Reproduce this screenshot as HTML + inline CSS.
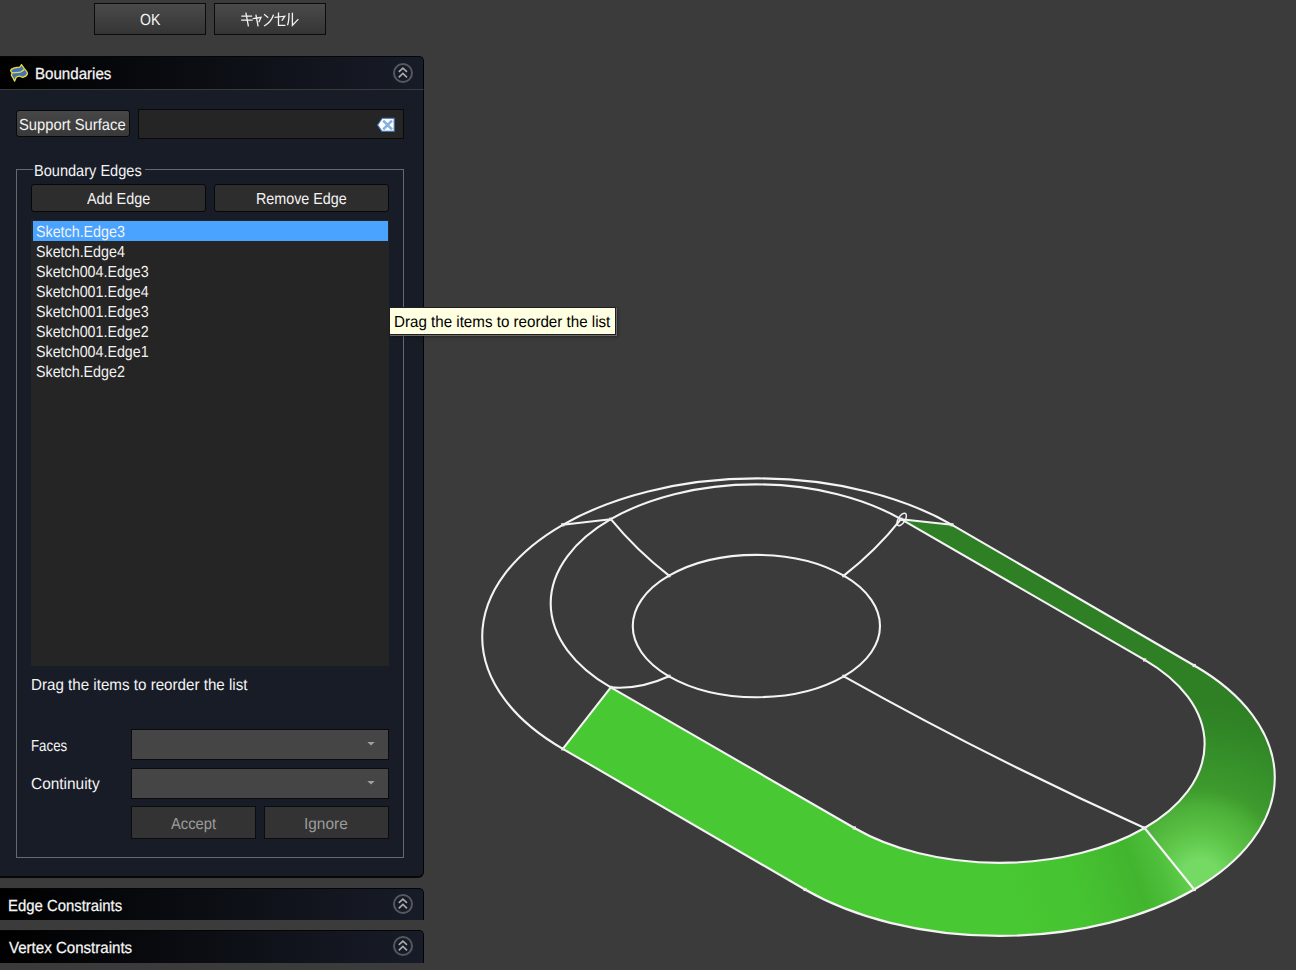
<!DOCTYPE html>
<html><head><meta charset="utf-8">
<style>
*{box-sizing:border-box;margin:0;padding:0}
html,body{width:1296px;height:970px;overflow:hidden;background:#3b3b3b;font-family:"Liberation Sans",sans-serif;color:#f4f4f4}
.a{position:absolute}
.t{position:absolute;white-space:nowrap;line-height:1}
.btn{position:absolute;border:1px solid #0b0b0b;background:linear-gradient(#4a4a4a,#353535)}
.hdr{position:absolute;left:0;width:424px;height:33px;border-top:1px solid #050505;border-right:1px solid #050505;border-top-right-radius:5px;background:linear-gradient(90deg,#000 0%,#181c28 100%)}
.pbtn{position:absolute;border:1px solid #080808;border-radius:3px;background:#2d2d2d}
.combo{position:absolute;border:1px solid #0c0c0c;background:#454545}
.gbtn{position:absolute;border:1px solid #0c0c0c;background:#333}
.circ{position:absolute;width:20px;height:20px;border:2px solid #55585f;border-radius:50%}
.b{font-weight:normal;-webkit-text-stroke:0.45px #f4f4f4}
.li{position:absolute;left:36px;font-size:14.2px;line-height:1;white-space:nowrap;color:#f2f2f2}
</style></head>
<body>
<!-- top buttons -->
<div class="btn" style="left:94px;top:3px;width:112px;height:32px"></div>
<div class="btn" style="left:214px;top:3px;width:112px;height:32px"></div>
<svg class="a" style="left:0;top:0" width="330" height="40"><g fill="none" stroke="#f2f2f2" stroke-width="1.3" stroke-linecap="square">
<path d="M242 16.2H251.5M241.8 20.2H252M246 13.3L248.3 25.7"/>
<path d="M253.3 18.6L261 17.3L259 21.7M256 15.2L258 25.7"/>
<path d="M264.6 14.7L267.7 17.3M264.6 25.7Q271 22 273.3 15.2"/>
<path d="M275.1 17.3L284.8 16.2L282.2 20.2M278.5 13.1V25.4H284.8"/>
<path d="M289 13.6Q289 21 287.7 24.6M292.4 13.3V25.4L297.9 19.6"/>
</g></svg>

<!-- Boundaries panel -->
<div class="a" style="left:0;top:89px;width:424px;height:789px;background:#181c27;border-right:1px solid #050505;border-bottom:2px solid #070707;border-bottom-right-radius:6px;border-top:1px solid #3a3a3a"></div>
<div class="hdr" style="top:56px"></div>
<svg class="a" style="left:6px;top:60px" width="26" height="26">
<path d="M4.6 10.5 C5.5 8.5 8 7.8 10.7 7.5 C12.5 7.4 13.5 7.5 14 7 L15.5 4.6 L18.5 8.8 C19.5 10 21.5 12 21.4 13.4 C21.3 15 20.5 16 17.4 17.2 C15.5 17.5 14.5 16 13.4 16.1 C12 16.3 11 16.5 10.2 17.2 L8.6 21.2 L6.7 17.2 C6 16.5 5.4 15.8 5.4 15 C5.4 14 6.2 13.5 6.2 12.9 C5.5 12 4.6 11.5 4.6 10.5 Z" fill="#3f72b8" stroke="#e8d83c" stroke-width="1.3" stroke-linejoin="round"/>
<path d="M6.2 12.9 C8 12.5 13 12.8 15 11.8 C16.5 11 17.5 10 18.5 9.1" fill="none" stroke="#e8d83c" stroke-width="1.3"/>
</svg>
<div class="circ" style="left:393px;top:63px"></div>
<svg class="a" style="left:393px;top:63px" width="20" height="20"><path d="M5.8 8.8 L9.9 5.2 L14 8.8 M5.8 14.4 L9.9 10.4 L14 14.4" fill="none" stroke="#a8a9ab" stroke-width="1.7"/></svg>

<div class="pbtn" style="left:16px;top:110px;width:114px;height:27px;background:linear-gradient(#474747,#393939)"></div>
<div class="a" style="left:138px;top:109px;width:266px;height:30px;background:#252525;border:1px solid #0a0a0a"></div>
<svg class="a" style="left:370px;top:110px" width="30" height="30">
<path d="M7.6 15 L12.2 8.2 H24.2 V21.4 H11.9 Z" fill="#fdfdfd" stroke="#3d6fb5" stroke-width="1.1"/>
<path d="M13.2 10.6 L22 19.4 M22 10.6 L13.2 19.4" stroke="#86aede" stroke-width="2.6"/>
</svg>

<!-- group box -->
<div class="a" style="left:16px;top:169px;width:388px;height:689px;border:1px solid #66696f"></div>
<div class="a" style="left:33px;top:160px;width:112px;height:20px;background:#181c27"></div>

<div class="pbtn" style="left:31px;top:184px;width:175px;height:28px"></div>
<div class="pbtn" style="left:214px;top:184px;width:175px;height:28px"></div>

<!-- list -->
<div class="a" style="left:31px;top:220px;width:358px;height:446px;background:#252525"></div>
<div class="a" style="left:33px;top:221px;width:355px;height:20px;background:#4aa3ff"></div>


<div class="combo" style="left:131px;top:729px;width:258px;height:31px"></div>
<svg class="a" style="left:364px;top:740px" width="14" height="8"><path d="M3.3 2 H10.7 L7 5.6 Z" fill="#a0a0a0"/></svg>
<div class="combo" style="left:131px;top:768px;width:258px;height:31px"></div>
<svg class="a" style="left:364px;top:779px" width="14" height="8"><path d="M3.3 2 H10.7 L7 5.6 Z" fill="#a0a0a0"/></svg>

<div class="gbtn" style="left:131px;top:806px;width:125px;height:33px"></div>
<div class="gbtn" style="left:264px;top:806px;width:125px;height:33px"></div>

<!-- collapsed panels -->
<div class="hdr" style="top:888px;height:32px"></div>
<div class="circ" style="left:393px;top:894px"></div>
<svg class="a" style="left:393px;top:894px" width="20" height="20"><path d="M5.8 8.8 L9.9 5.2 L14 8.8 M5.8 14.4 L9.9 10.4 L14 14.4" fill="none" stroke="#a8a9ab" stroke-width="1.7"/></svg>
<div class="hdr" style="top:930px;height:33px"></div>
<div class="circ" style="left:393px;top:936px"></div>
<svg class="a" style="left:393px;top:936px" width="20" height="20"><path d="M5.8 8.8 L9.9 5.2 L14 8.8 M5.8 14.4 L9.9 10.4 L14 14.4" fill="none" stroke="#a8a9ab" stroke-width="1.7"/></svg>

<!-- 3D view -->
<svg class="a" style="left:0;top:0" width="1296" height="970">
<defs>
<linearGradient id="g1" x1="1000" y1="880" x2="1170.3" y2="821.9" gradientUnits="userSpaceOnUse"><stop offset="0" stop-color="#48c832"/><stop offset="0.4" stop-color="#46c331"/><stop offset="0.72" stop-color="#42b52e"/><stop offset="0.86" stop-color="#4dbe3b"/><stop offset="1" stop-color="#62ce4c"/></linearGradient>
<radialGradient id="g2" cx="1200" cy="878" r="180" gradientUnits="userSpaceOnUse"><stop offset="0.1" stop-color="#74da64"/><stop offset="0.25" stop-color="#5cc447"/><stop offset="0.4" stop-color="#4cb038"/><stop offset="0.49" stop-color="#3e9b2d"/><stop offset="0.68" stop-color="#36902a"/><stop offset="0.83" stop-color="#318626"/><stop offset="1" stop-color="#2f7f24"/></radialGradient>
</defs>
<path d="M610.8 687.4 L854.4 828 A205.21 118.92 0 0 0 1144.6 828 L1194.2 889.5 A275.2 158.4 0 0 1 805 889.5 L562.8 748.8 Z" fill="url(#g1)"/>
<path d="M901 519.2 L952 524.8 L1194.2 665.5 A275.2 158.4 0 0 1 1194.2 889.5 L1144.6 828 A205.21 118.92 0 0 0 1144.6 659.9 Z" fill="url(#g2)"/>
<g fill="none" stroke="#f4f4f4" stroke-width="2.1">
<path d="M562.8 748.8 A275.2 158.4 0 0 1 562.8 524.8 A275.2 158.4 0 0 1 952 524.8"/>
<path d="M610.8 687.4 A205.21 118.92 0 0 1 610.8 519.2 A205.21 118.92 0 0 1 901 519.2"/>
<ellipse cx="756.38" cy="626.03" rx="123.62" ry="71.16"/>
<path d="M805 889.5 A275.2 158.4 0 0 0 1194.2 889.5 A275.2 158.4 0 0 0 1194.2 665.5"/>
<path d="M854.4 828 A205.21 118.92 0 0 0 1144.6 828 A205.21 118.92 0 0 0 1144.6 659.9"/>
<path d="M562.8 748.8 L805 889.5 M610.8 687.4 L854.4 828 M952 524.8 L1194.2 665.5 M901 519.2 L1144.6 659.9"/>
<path d="M562.8 524.8 L610.8 519.2 M901 519.2 L952 524.8 M562.8 748.8 L610.8 687.4 M1194.2 889.5 L1144.6 828"/>
<path d="M610.8 519.2 Q636.8 550.7 669 575.7 M901 519.2 Q876 550.7 843.8 575.7 M610.8 687.4 Q639.8 689.8 669 676.3 M843.8 676.3 Q990.2 758.5 1144.6 828"/>
</g>
<g fill="#ececec"><rect x="561.2" y="523.2" width="3.2" height="3.2"/><rect x="609.2" y="517.6" width="3.2" height="3.2"/><rect x="667.4" y="574.1" width="3.2" height="3.2"/><rect x="842.2" y="574.1" width="3.2" height="3.2"/><rect x="899.4" y="517.6" width="3.2" height="3.2"/><rect x="950.4" y="523.2" width="3.2" height="3.2"/><rect x="609.2" y="685.8" width="3.2" height="3.2"/><rect x="561.2" y="747.2" width="3.2" height="3.2"/><rect x="667.4" y="674.7" width="3.2" height="3.2"/><rect x="842.2" y="674.7" width="3.2" height="3.2"/><rect x="852.8" y="826.4" width="3.2" height="3.2"/><rect x="803.4" y="887.9" width="3.2" height="3.2"/><rect x="1143.0" y="658.3" width="3.2" height="3.2"/><rect x="1192.6" y="663.9" width="3.2" height="3.2"/><rect x="1143.0" y="826.4" width="3.2" height="3.2"/><rect x="1192.6" y="887.9" width="3.2" height="3.2"/></g>
<ellipse cx="901.7" cy="519.4" rx="7" ry="3.4" transform="rotate(-58 901.7 519.4)" fill="none" stroke="#f0f0f0" stroke-width="1.5"/>
</svg>

<!-- tooltip -->
<div class="a" style="left:389px;top:307px;width:227px;height:28px;background:#ffffe1;border:1px solid #1e1e1e;box-shadow:1px 1px 0 #6a6a6a,2px 2px 3px rgba(0,0,0,.35)"></div>
<span style="position:absolute;left:139.72px;top:13px;font-family:'Liberation Sans';line-height:1;white-space:nowrap;text-rendering:geometricPrecision;font-size:16.0px;color:#f4f4f4;transform:scaleX(0.8818);transform-origin:0 0;">OK</span>
<span style="position:absolute;left:34.56px;top:67px;font-family:'Liberation Sans';line-height:1;white-space:nowrap;text-rendering:geometricPrecision;font-size:16.0px;color:#f6f6f6;transform:scaleX(0.9437);transform-origin:0 0;-webkit-text-stroke:0.25px currentColor;">Boundaries</span>
<span style="position:absolute;left:19.48px;top:118px;font-family:'Liberation Sans';line-height:1;white-space:nowrap;text-rendering:geometricPrecision;font-size:16.0px;color:#f4f4f4;transform:scaleX(0.9219);transform-origin:0 0;">Support Surface</span>
<span style="position:absolute;left:33.89px;top:164px;font-family:'Liberation Sans';line-height:1;white-space:nowrap;text-rendering:geometricPrecision;font-size:16.0px;color:#f4f4f4;transform:scaleX(0.9103);transform-origin:0 0;">Boundary Edges</span>
<span style="position:absolute;left:87.00px;top:192px;font-family:'Liberation Sans';line-height:1;white-space:nowrap;text-rendering:geometricPrecision;font-size:16.0px;color:#f4f4f4;transform:scaleX(0.9000);transform-origin:0 0;">Add Edge</span>
<span style="position:absolute;left:255.60px;top:192px;font-family:'Liberation Sans';line-height:1;white-space:nowrap;text-rendering:geometricPrecision;font-size:16.0px;color:#f4f4f4;transform:scaleX(0.8950);transform-origin:0 0;">Remove Edge</span>
<span style="position:absolute;left:31.05px;top:678px;font-family:'Liberation Sans';line-height:1;white-space:nowrap;text-rendering:geometricPrecision;font-size:16.0px;color:#f4f4f4;transform:scaleX(0.9474);transform-origin:0 0;">Drag the items to reorder the list</span>
<span style="position:absolute;left:30.67px;top:739px;font-family:'Liberation Sans';line-height:1;white-space:nowrap;text-rendering:geometricPrecision;font-size:16.0px;color:#f4f4f4;transform:scaleX(0.8310);transform-origin:0 0;">Faces</span>
<span style="position:absolute;left:30.64px;top:777px;font-family:'Liberation Sans';line-height:1;white-space:nowrap;text-rendering:geometricPrecision;font-size:16.0px;color:#f4f4f4;transform:scaleX(0.9643);transform-origin:0 0;">Continuity</span>
<span style="position:absolute;left:171.00px;top:817px;font-family:'Liberation Sans';line-height:1;white-space:nowrap;text-rendering:geometricPrecision;font-size:16.0px;color:#9c9c9c;transform:scaleX(0.9224);transform-origin:0 0;">Accept</span>
<span style="position:absolute;left:304.34px;top:817px;font-family:'Liberation Sans';line-height:1;white-space:nowrap;text-rendering:geometricPrecision;font-size:16.0px;color:#9c9c9c;transform:scaleX(0.9636);transform-origin:0 0;">Ignore</span>
<span style="position:absolute;left:8.37px;top:899px;font-family:'Liberation Sans';line-height:1;white-space:nowrap;text-rendering:geometricPrecision;font-size:16.0px;color:#f6f6f6;transform:scaleX(0.9303);transform-origin:0 0;-webkit-text-stroke:0.25px currentColor;">Edge Constraints</span>
<span style="position:absolute;left:9.30px;top:941px;font-family:'Liberation Sans';line-height:1;white-space:nowrap;text-rendering:geometricPrecision;font-size:16.0px;color:#f6f6f6;transform:scaleX(0.9420);transform-origin:0 0;-webkit-text-stroke:0.25px currentColor;">Vertex Constraints</span>
<span style="position:absolute;left:393.85px;top:315px;font-family:'Liberation Sans';line-height:1;white-space:nowrap;text-rendering:geometricPrecision;font-size:16.0px;color:#000000;transform:scaleX(0.9465);transform-origin:0 0;">Drag the items to reorder the list</span>
<span style="position:absolute;left:35.61px;top:225px;font-family:'Liberation Sans';line-height:1;white-space:nowrap;text-rendering:geometricPrecision;font-size:16.0px;color:#f2f2f2;transform:scaleX(0.8920);transform-origin:0 0">Sketch.Edge3</span>
<span style="position:absolute;left:35.61px;top:245px;font-family:'Liberation Sans';line-height:1;white-space:nowrap;text-rendering:geometricPrecision;font-size:16.0px;color:#f2f2f2;transform:scaleX(0.8920);transform-origin:0 0">Sketch.Edge4</span>
<span style="position:absolute;left:35.61px;top:265px;font-family:'Liberation Sans';line-height:1;white-space:nowrap;text-rendering:geometricPrecision;font-size:16.0px;color:#f2f2f2;transform:scaleX(0.8920);transform-origin:0 0">Sketch004.Edge3</span>
<span style="position:absolute;left:35.61px;top:285px;font-family:'Liberation Sans';line-height:1;white-space:nowrap;text-rendering:geometricPrecision;font-size:16.0px;color:#f2f2f2;transform:scaleX(0.8920);transform-origin:0 0">Sketch001.Edge4</span>
<span style="position:absolute;left:35.61px;top:305px;font-family:'Liberation Sans';line-height:1;white-space:nowrap;text-rendering:geometricPrecision;font-size:16.0px;color:#f2f2f2;transform:scaleX(0.8920);transform-origin:0 0">Sketch001.Edge3</span>
<span style="position:absolute;left:35.61px;top:325px;font-family:'Liberation Sans';line-height:1;white-space:nowrap;text-rendering:geometricPrecision;font-size:16.0px;color:#f2f2f2;transform:scaleX(0.8920);transform-origin:0 0">Sketch001.Edge2</span>
<span style="position:absolute;left:35.61px;top:345px;font-family:'Liberation Sans';line-height:1;white-space:nowrap;text-rendering:geometricPrecision;font-size:16.0px;color:#f2f2f2;transform:scaleX(0.8920);transform-origin:0 0">Sketch004.Edge1</span>
<span style="position:absolute;left:35.61px;top:365px;font-family:'Liberation Sans';line-height:1;white-space:nowrap;text-rendering:geometricPrecision;font-size:16.0px;color:#f2f2f2;transform:scaleX(0.8920);transform-origin:0 0">Sketch.Edge2</span>
</body></html>
